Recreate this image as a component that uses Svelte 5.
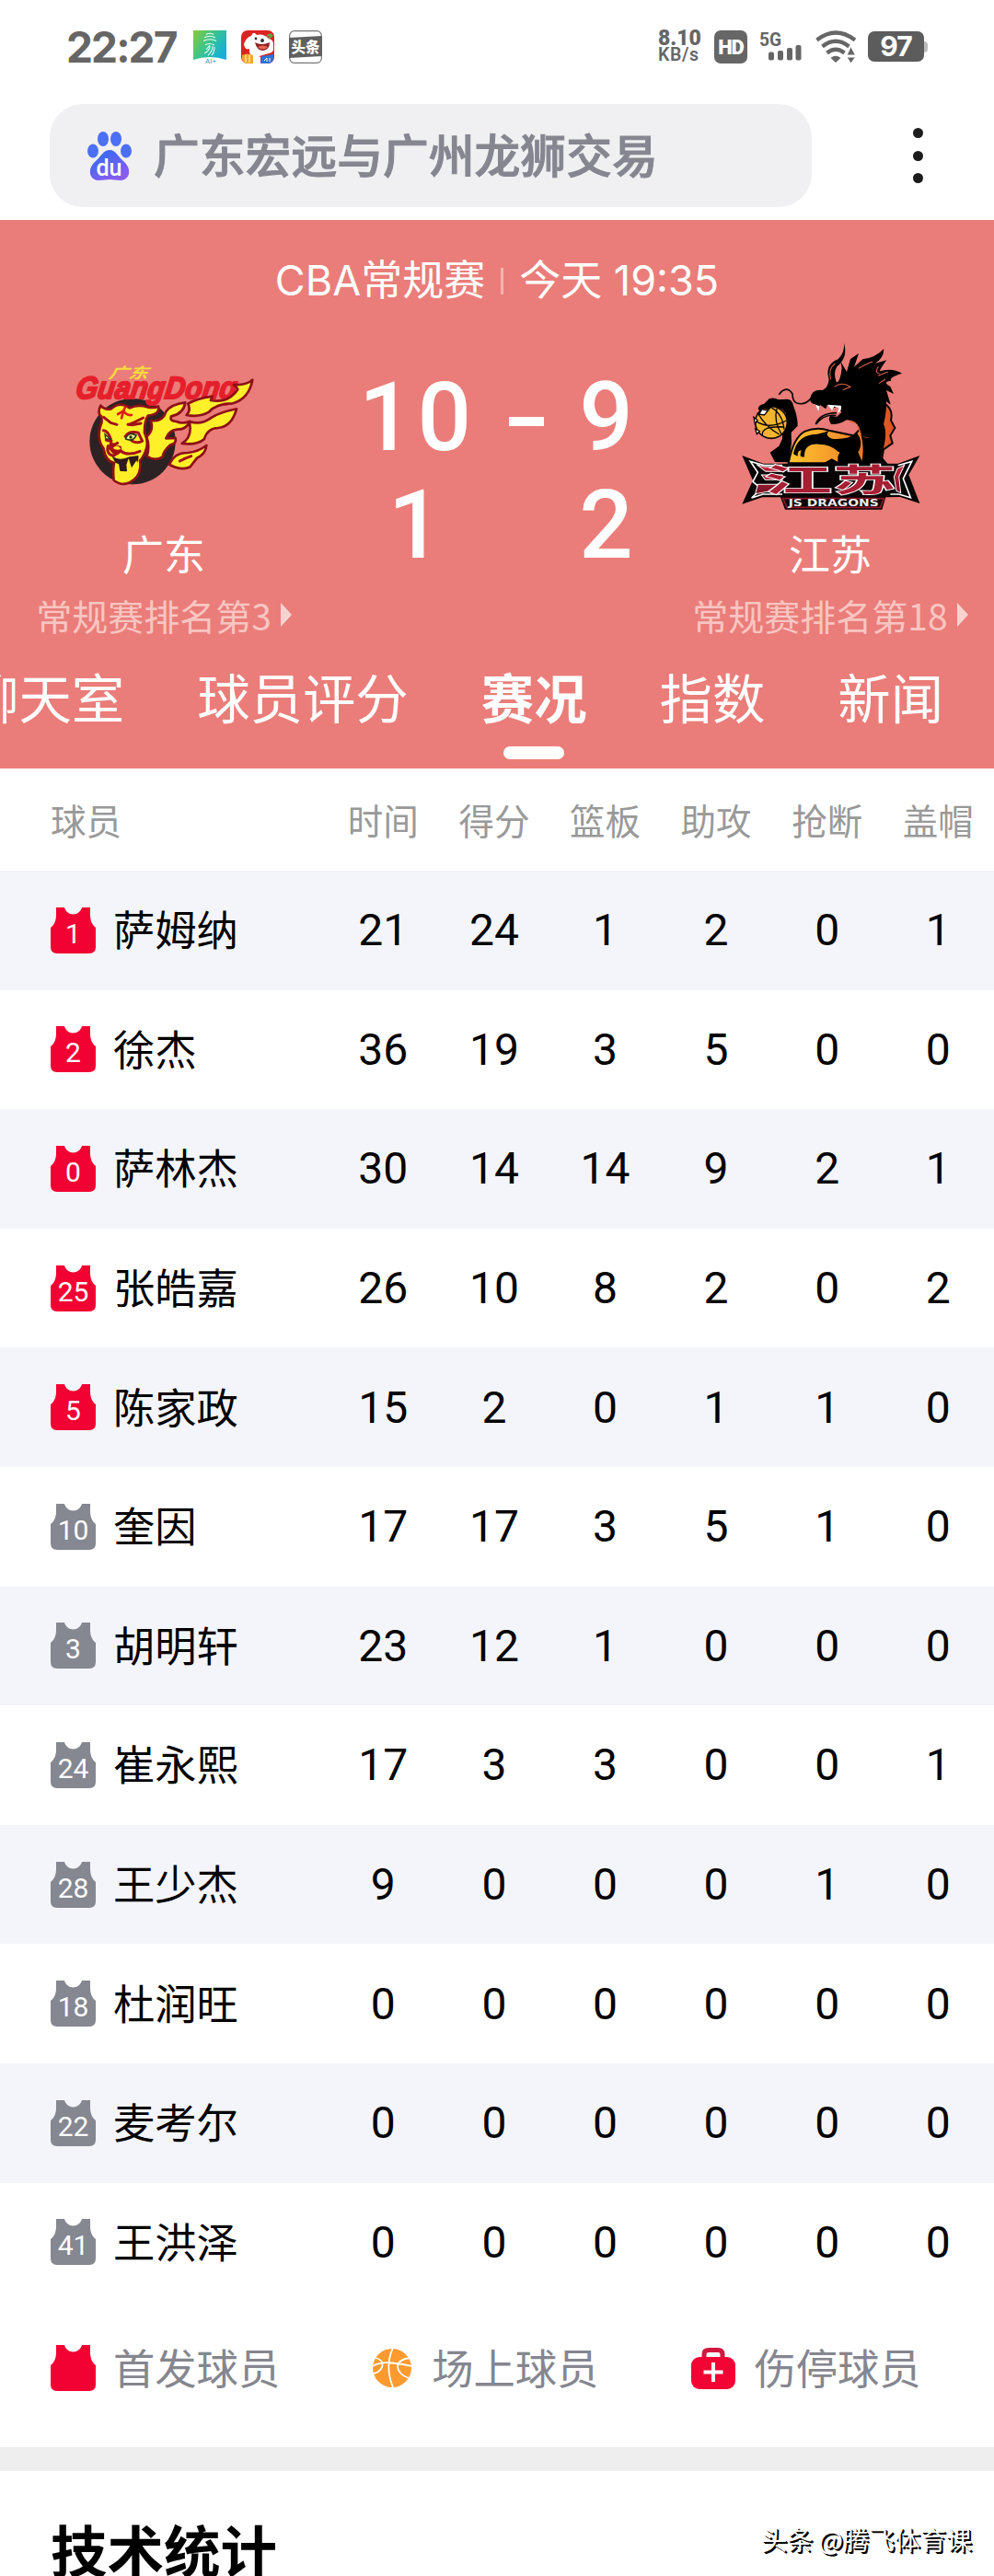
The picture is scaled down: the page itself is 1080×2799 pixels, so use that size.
<script lang="ts">
  type Player = {
    num: number;
    name: string;
    starter?: boolean;
    stats: number[];
  };

  const tabs = ["聊天室", "球员评分", "赛况", "指数", "新闻"];
  const activeTab = "赛况";
  const columns = ["时间", "得分", "篮板", "助攻", "抢断", "盖帽"];

  const players: Player[] = [
    { num: 1, name: "萨姆纳", starter: true, stats: [21, 24, 1, 2, 0, 1] },
    { num: 2, name: "徐杰", starter: true, stats: [36, 19, 3, 5, 0, 0] },
    { num: 0, name: "萨林杰", starter: true, stats: [30, 14, 14, 9, 2, 1] },
    { num: 25, name: "张皓嘉", starter: true, stats: [26, 10, 8, 2, 0, 2] },
    { num: 5, name: "陈家政", starter: true, stats: [15, 2, 0, 1, 1, 0] },
    { num: 10, name: "奎因", stats: [17, 17, 3, 5, 1, 0] },
    { num: 3, name: "胡明轩", stats: [23, 12, 1, 0, 0, 0] },
    { num: 24, name: "崔永熙", stats: [17, 3, 3, 0, 0, 1] },
    { num: 28, name: "王少杰", stats: [9, 0, 0, 0, 1, 0] },
    { num: 18, name: "杜润旺", stats: [0, 0, 0, 0, 0, 0] },
    { num: 22, name: "麦考尔", stats: [0, 0, 0, 0, 0, 0] },
    { num: 41, name: "王洪泽", stats: [0, 0, 0, 0, 0, 0] },
  ];
</script>

{#snippet jersey(starter: boolean, num: number | null)}
  <svg class="jersey" class:starter viewBox="0 0 49 50">
    <path d="M6 0H15C16 4 20 7.500 24.500 7.500C29 7.500 33 4 34 0H43V8C43 14 45 19 49 22V43Q49 50 42 50H7Q0 50 0 43V22C4 19 6 14 6 8Z" />
    {#if num !== null}
      <text x="24.500" y="39" text-anchor="middle">{num}</text>
    {/if}
  </svg>
{/snippet}

<div class="page">
  <!-- Status bar -->
  <header class="status">
    <span class="clock">22:27</span>
    <svg class="app" viewBox="0 0 36 36">
      <defs>
        <linearGradient id="aiGrad" x1="0" y1="0" x2="1" y2="0.6">
          <stop offset="0" stop-color="#8ccb35" />
          <stop offset="0.5" stop-color="#3cc48b" />
          <stop offset="1" stop-color="#16afd8" />
        </linearGradient>
      </defs>
      <path d="M0 0H36V32Q18 26 0 32Z" fill="url(#aiGrad)" />
      <g fill="none" stroke="#e9fff4" stroke-width="1.100">
        <path d="M14 4.500Q18 2 22 4.500M12 8Q18 4.500 24 8M11 11.500Q18 8 25 11.500M13 16Q17 13 23 16M14 21L18 16M12 25Q18 22 18 17M16 27Q21 23 21 17M20 27Q23 24 23 18" />
      </g>
      <text x="19" y="35.500" font-size="8" text-anchor="middle" fill="#1fa3b5">AI+</text>
    </svg>
    <svg class="app" viewBox="0 0 36 36">
      <rect width="36" height="36" rx="7" fill="#dc2320" />
      <path d="M3 15Q5 8 11 6Q13 0 17 5Q24 3 30 9Q36 10 35 18Q36 24 30 25L16 29Q8 29 9 20Q4 22 3 15Z" fill="#fff" />
      <path d="M15 13Q22 17 31 13Q31 21 24 22Q17 22 15 13Z" fill="#8c2423" />
      <path d="M18 18Q23 15 29 18Q24 23 18 18Z" fill="#ef6358" />
      <circle cx="16" cy="9" r="1.400" fill="#333" />
      <circle cx="23" cy="11" r="2" fill="#333" />
      <path d="M28 6l5-2M30 9l4-4" stroke="#69a44f" stroke-width="2" />
      <path d="M1 27Q7 24 13 27V36H6Q2 35 1 31Z" fill="#f1a82d" />
      <path d="M5 27V35M9 27V35" stroke="#ffe58a" stroke-width="1.500" />
      <path d="M13 25l8 4v7h-8z" fill="#fff" />
      <path d="M22 28L35 26V31Q34 36 29 36H21Z" fill="#2f72cf" />
      <path d="M25 33l3-3v4m3-4v4" stroke="#fff" stroke-width="1" fill="none" />
    </svg>
    <svg class="app" viewBox="0 0 36 36">
      <rect x="0.700" y="0.700" width="34.600" height="34.600" rx="5" fill="#fff" stroke="#777" stroke-width="1.200" />
      <path d="M0 8L36 6V28L0 30Z" fill="#606060" />
      <text x="18" y="24" text-anchor="middle" class="cjk" font-size="15.500" font-weight="900" fill="#fff">头条</text>
    </svg>
    <div class="right">
      <div class="speed"><b>8.10</b><span>KB/s</span></div>
      <span class="hd">HD</span>
      <svg class="signal" viewBox="0 0 46 36">
        <text x="0" y="16.500" font-size="20" font-weight="700" fill="#666" textLength="24" lengthAdjust="spacingAndGlyphs">5G</text>
        <g fill="#666">
          <rect x="10" y="23.500" width="6" height="9" rx="2" />
          <rect x="20" y="22" width="6" height="10.500" rx="2" />
          <rect x="30" y="19" width="6" height="13.500" rx="2" />
          <rect x="39.500" y="16" width="6" height="16.500" rx="2" />
        </g>
      </svg>
      <svg class="wifi" viewBox="0 0 45 36">
        <g fill="none" stroke="#666" stroke-width="4.200">
          <path d="M1.500 10.500Q22 -5.500 43 10.500" />
          <path d="M7.500 17.500Q22 6 36.500 17.500" />
          <path d="M12.500 24.500Q22 17 31.500 24.500" />
        </g>
        <path d="M16.500 30Q22 25.500 27.500 30L22 35Z" fill="#666" />
        <path d="M34 27L38.500 17.500L43.500 27ZM34 29H43.500L38.500 36Z" fill="#666" stroke="#fff" stroke-width="1" />
      </svg>
      <div class="battery"><span>97</span><i></i></div>
    </div>
  </header>

  <!-- Search -->
  <div class="search-row">
    <div class="search">
      <svg class="paw" viewBox="0 0 48 53">
        <defs>
          <linearGradient id="pawGrad" x1="0" y1="0" x2="0.6" y2="1">
            <stop offset="0.300" stop-color="#4368f2" />
            <stop offset="1" stop-color="#8a5cf0" />
          </linearGradient>
        </defs>
        <g fill="#4b6ff5">
          <ellipse cx="17" cy="8" rx="6" ry="8" />
          <ellipse cx="31" cy="8" rx="6" ry="8" />
          <ellipse cx="6" cy="21" rx="6" ry="7.500" />
          <ellipse cx="42" cy="21" rx="6" ry="7.500" />
        </g>
        <path d="M24 20C31 20 33 27 39 32C49 40 46 53 36 53C31 53 28 52 24 52C20 52 17 53 12 53C2 53 -1 40 9 32C15 27 17 20 24 20Z" fill="url(#pawGrad)" />
        <text x="23.500" y="47.500" text-anchor="middle" font-size="25" font-weight="500" fill="#fff">du</text>
      </svg>
      <span>广东宏远与广州龙狮交易</span>
    </div>
    <div class="more"><i></i><i></i><i></i></div>
  </div>

  <!-- Scoreboard -->
  <section class="hero">
    <div class="match">
      <span>CBA常规赛</span><i></i><span>今天 19:35</span>
    </div>

    <div class="board">
      <div class="team">
        <svg class="logo tiger" viewBox="60 80 590 400">
          <circle cx="252" cy="328" r="140" fill="#2c2224" />
          <g class="cjk" fill="#f7dc3b" font-size="48" font-weight="700">
            <text transform="translate(172 121) skewX(-28)" textLength="128" lengthAdjust="spacingAndGlyphs">广东</text>
          </g>
          <text transform="translate(64 187) skewX(-8)" class="wordmark" font-size="102" textLength="524" lengthAdjust="spacingAndGlyphs">GuangDong</text>
          <g fill="#fff02a" stroke="#8d1019" stroke-width="8" stroke-linejoin="round">
            <path d="M433 205Q462 188 512 181L507 194Q565 205 595 158Q590 148 582 143Q626 145 643 127Q632 188 578 204Q525 204 501 232Q470 250 428 242Q443 228 433 205Z" />
            <path d="M438 263Q475 276 510 250Q541 231 591 222Q575 281 530 284Q496 285 486 320Q463 341 413 335Q440 318 440 286Z" />
            <path d="M311 260Q350 266 361 231Q376 207 424 201Q418 239 378 246Q372 263 395 263Q414 272 438 263Q428 290 397 289Q371 291 361 318L392 317Q397 335 374 340Q352 360 350 378Q325 394 299 377Q309 344 298 313Q323 290 311 260Z" />
            <path d="M373 404Q386 365 431 365Q466 362 493 341Q490 371 462 382L440 411Q413 425 373 404Z" />
            <path d="M148 211Q160 226 182 222Q211 195 243 219Q269 206 300 216Q324 221 336 213Q342 241 302 244Q290 262 291 300Q307 335 293 363Q283 385 276 390Q284 440 244 461Q219 475 191 455Q187 420 192 398Q164 392 157 350Q135 321 147 279Q155 263 150 246Q136 236 148 211Z" />
          </g>
          <g fill="none" stroke="#a31118" stroke-width="9" stroke-linecap="round" stroke-linejoin="round">
            <path d="M228 216L223 228M204 239L223 228L216 252M223 228Q232 244 249 242" stroke="#da201b" stroke-width="8" />
            <path d="M158 249L181 267L201 273M287 251Q250 270 237 273L254 274L279 269" />
            <path d="M157 292Q172 293 181 320M228 312Q242 292 271 300L284 327Q268 336 249 326M166 323Q170 326 183 326M181 334L191 339L203 333" />
            <path d="M172 343Q165 370 190 375L213 359Q236 377 276 360" />
            <path d="M406 392Q422 383 443 376" />
          </g>
          <path d="M175 336L215 343L217 358L205 371L188 368L174 352Z" fill="#a31118" />
          <path d="M188 350Q200 334 214 352Q202 359 188 350" fill="#ffed25" />
          <path d="M184 375Q209 394 242 378L271 374Q275 403 243 427Q221 433 201 419L196 398Z" fill="#30191c" />
          <path d="M196 397L207 402L211 425L234 426L232 404L239 383L249 414L265 390Q279 425 247 444Q221 461 198 444Z" fill="#ffed25" />
          <path d="M230 316Q241 295 264 308Q254 330 230 320Z" fill="#f2f391" stroke="#263522" stroke-width="5" />
          <circle cx="246" cy="314" r="5" fill="#223421" />
          <path d="M162 304L180 321L164 319Z" fill="#f2f391" stroke="#263522" stroke-width="4" />
        </svg>
        <div class="name">广东</div>
        <div class="rank">常规赛排名第3<i></i></div>
      </div>

      <div class="score">
        <div class="points">101</div>
        <div class="dash"></div>
        <div class="points">92</div>
      </div>

      <div class="team">
        <svg class="logo dragon" viewBox="70 30 590 560">
          <defs>
            <linearGradient id="bodyGrad" x1="0" y1="0" x2="1" y2="0">
              <stop offset="0" stop-color="#ffc52b" />
              <stop offset="0.500" stop-color="#f3922c" />
              <stop offset="1" stop-color="#d94f23" />
            </linearGradient>
            <linearGradient id="crimson" x1="0" y1="0" x2="0" y2="1">
              <stop offset="0" stop-color="#cc2942" />
              <stop offset="1" stop-color="#781222" />
            </linearGradient>
          </defs>
          <path d="M228 430Q244 345 282 326Q320 310 360 323L440 340L480 300L548 240Q570 260 562 290L575 315L560 340L567 365L538 385L530 430Z" fill="url(#bodyGrad)" stroke="#080406" stroke-width="6" />
          <path d="M244 400Q254 345 305 337Q342 333 360 323Q345 342 370 350Q420 354 452 332Q472 358 458 390Q425 415 390 392Q365 368 327 368Q278 365 280 409Q260 414 270 388Q257 388 258 407Z" />
          <path d="M389 409Q392 391 411 391L450 382L470 430H389Z" />
          <path d="M298 220Q304 188 339 192Q357 185 360 157Q345 108 390 91Q413 66 409 38Q423 85 386 115Q373 136 384 166Q397 166 402 119L398 98L418 132L430 90L457 72L442 116L470 91Q512 86 539 57Q539 87 510 105L548 94Q531 116 525 130Q566 118 598 137Q553 150 563 161Q532 164 560 180L571 204L547 192L561 239L547 229Q548 265 538 303Q556 336 523 430H465Q480 382 458 312Q445 290 417 289Q397 304 367 303Q354 281 366 275L385 279L401 264L389 244L367 254L355 239L350 253L331 240L326 263L316 238Q299 237 298 220Z" />
          <path d="M300 220Q281 242 255 234Q241 228 241 204Q222 174 197 206M385 266Q329 267 317 303Q345 268 383 275" fill="none" stroke="#080406" stroke-width="5" />
          <path d="M366 157Q356 123 380 105M377 181Q403 163 430 181L405 191M456 121Q486 104 502 99M521 115Q507 136 525 138M552 132L520 145M544 156L523 170" fill="none" stroke="#dc654b" stroke-width="3" />
          <path d="M316 239L326 263L330 244ZM355 239L370 258L377 245L392 249L388 267Q405 255 399 242Z" fill="#fff" />
          <path d="M423 293Q451 284 462 326Q470 352 493 347Q458 346 450 302Z" fill="#e85e31" />
          <path d="M184 426L168 395L197 374L208 350L207 300L220 268L202 248L180 253L154 263L132 259Q122 242 149 236L165 220Q181 213 195 223L223 221Q241 221 245 245Q258 277 258 308L237 330L238 364L229 427Z" />
          <circle cx="172" cy="297" r="52" fill="#f2b52d" stroke="#080406" stroke-width="5" />
          <path d="M121 292Q165 322 221 291M127 265Q153 311 198 336M143 339Q139 307 214 312M165 245Q208 263 214 320M190 252Q179 293 206 337" fill="none" stroke="#080406" stroke-width="4" />
          <path d="M132 270L142 254L161 259L149 273ZM115 280l12 10-8 12zM120 318l14 7-9 10z" fill="#fff" stroke="#080406" stroke-width="4" />
          <path d="M142 250Q153 226 177 222Q207 219 222 239L241 257L225 276L211 254L190 249L177 240L164 258Z" />
          <!-- banner behind the team name -->
          <path d="M77 405L146 431H340L369 415L400 431H502L532 409L551 431H585L656 405L620 468L656 561L592 540L545 541L533 581H217L202 541H143L77 563L112 486Z" fill="#080406" />
          <path d="M208 437H151L104 424L128 460L112 490L139 513L108 543L145 531H208M585 437L630 424L602 480L626 542L588 531H560" fill="none" stroke="#fff" stroke-width="5" />
          <path d="M124 434L151 442H208V457H154ZM140 468H208V484H152ZM128 499H208V514L120 530ZM606 436L583 447L572 474L580 520L594 526L588 474Z" fill="url(#crimson)" stroke="#fff" stroke-width="3" />
          <g class="cjk banner-name">
            <text transform="translate(150 521) scale(2.15 1)">江</text>
            <text transform="translate(374 521) scale(2 1)">苏</text>
          </g>
          <path d="M210 545L223 574H527L539 545Z" fill="#080406" stroke="#8e1528" stroke-width="5" />
          <text x="375" y="569" text-anchor="middle" class="banner" textLength="294" lengthAdjust="spacingAndGlyphs">JS DRAGONS</text>
        </svg>
        <div class="name">江苏</div>
        <div class="rank">常规赛排名第18<i></i></div>
      </div>
    </div>

    <nav class="tabs">
      {#each tabs as tab}
        <span class:active={tab === activeTab}>{tab}</span>
      {/each}
    </nav>
  </section>

  <!-- Player stats -->
  <section class="table">
    <div class="row head">
      <span class="player">球员</span>
      {#each columns as col}
        <span>{col}</span>
      {/each}
    </div>
    {#each players as p}
      <div class="row">
        <div class="player">
          {@render jersey(!!p.starter, p.num)}
          <span class="label">{p.name}</span>
        </div>
        {#each p.stats as value}
          <span class="value">{value}</span>
        {/each}
      </div>
    {/each}
  </section>

  <!-- Legend -->
  <div class="legend">
    <div class="item">
      {@render jersey(true, null)}
      <span class="label">首发球员</span>
    </div>
    <div class="item">
      <svg class="ball" viewBox="0 0 42 42">
        <circle cx="21" cy="21" r="21" fill="#ff9a2e" />
        <g fill="none" stroke="#fff" stroke-width="1.800">
          <path d="M0 19Q8 14 21 15.500T42 19M21.500 0Q13 20 22 42M3 10Q14 13 9 22Q6 26 1 27M40 10Q27 12 27 20Q28 28 39 32" />
        </g>
      </svg>
      <span class="label">场上球员</span>
    </div>
    <div class="item">
      <svg class="kit" viewBox="0 0 48 45">
        <path d="M14 13V7Q14 2.500 19 2.500H29Q34 2.500 34 7V13" fill="none" stroke="#d21640" stroke-width="5" />
        <rect y="10" width="48" height="35" rx="9" fill="#f20535" />
        <path d="M24 16V37M13.500 26.500H34.500" stroke="#fff" stroke-width="4" />
      </svg>
      <span class="label">伤停球员</span>
    </div>
  </div>

  <div class="divider"></div>
  <h2>技术统计</h2>
  <div class="watermark">头条 @腾飞体育课</div>
</div>

<style>
  :global(body) {
    margin: 0;
    background: #fff;
  }

  .page {
    position: relative;
    width: 1080px;
    height: 2799px;
    overflow: hidden;
    background: #fff;
    color: #000;
    font-family: Roboto, "Noto Sans CJK SC", sans-serif;
  }

  .page * {
    box-sizing: border-box;
  }

  svg {
    display: block;
    flex: none;
  }

  .cjk {
    font-family: "Noto Sans CJK SC", sans-serif;
  }

  /* status bar */
  .status {
    display: flex;
    align-items: center;
    height: 113px;
    padding: 0 72px 12px 72px;
  }

  .clock {
    width: 138px;
    font-family: Inter, sans-serif;
    font-size: 46px;
    font-weight: 700;
    letter-spacing: -1.9px;
    color: #666;
  }

  .app {
    width: 36px;
    height: 36px;
    margin-right: 16px;
  }

  .right {
    display: flex;
    align-items: center;
    margin-left: auto;
    color: #666;
  }

  .speed {
    display: flex;
    flex-direction: column;
    width: 61px;
    font-size: 23px;
    line-height: 18px;
    font-weight: 700;
    white-space: nowrap;
  }

  .speed span {
    font-size: 19.5px;
    font-weight: 600;
    letter-spacing: 0.6px;
  }

  .hd {
    width: 36px;
    height: 36px;
    border-radius: 7px;
    background: #666;
    color: #fff;
    font-size: 22px;
    font-weight: 900;
    line-height: 37px;
    text-align: center;
    letter-spacing: -1px;
  }

  .signal {
    width: 46px;
    height: 36px;
    margin-left: 13px;
  }

  .wifi {
    width: 45px;
    height: 36px;
    margin-left: 15px;
  }

  .battery {
    display: flex;
    align-items: center;
    margin-left: 12px;
  }

  .battery span {
    width: 61px;
    height: 33px;
    border-radius: 7px;
    background: #5c5c5c;
    color: #fff;
    font-family: Inter, sans-serif;
    font-size: 30px;
    font-weight: 700;
    line-height: 33px;
    text-align: center;
    letter-spacing: -1px;
  }

  .battery i {
    width: 4px;
    height: 12px;
    border-radius: 0 4px 4px 0;
    background: #bbb;
  }

  /* search */
  .search-row {
    display: flex;
    align-items: center;
    height: 112px;
    padding-left: 54px;
  }

  .search {
    display: flex;
    align-items: center;
    width: 828px;
    height: 112px;
    padding: 2px 0 0 41px;
    border-radius: 36px;
    background: #f0f0f2;
    color: #858690;
    font-size: 49.8px;
    font-weight: 500;
    line-height: 110px;
    -webkit-text-stroke: 1px #858690;
  }

  .search span {
    padding-top: 2px;
  }

  .paw {
    width: 48px;
    height: 53px;
    margin: 0 24px 2px 0;
    -webkit-text-stroke: 0;
  }

  .more {
    display: flex;
    flex-direction: column;
    gap: 13.5px;
    margin-left: 109.5px;
  }

  .more i {
    width: 11px;
    height: 11px;
    border-radius: 50%;
    background: #1c1c1c;
  }

  /* scoreboard */
  .hero {
    height: 596px;
    margin-top: 14px;
    padding-top: 37px;
    background: #ea7d79;
    color: #fff;
  }

  .match {
    display: flex;
    justify-content: center;
    align-items: center;
    height: 58px;
    font-family: Inter, "Noto Sans CJK SC", sans-serif;
    font-size: 45px;
    line-height: 58px;
  }

  .match i {
    width: 3px;
    height: 29px;
    margin: 0 17px;
    background: #f3b3b0;
  }

  .board {
    display: grid;
    grid-template-columns: 356px 1fr 356px;
    height: 370px;
  }

  .team {
    display: flex;
    flex-direction: column;
    align-items: center;
  }

  .logo {
    width: 196.7px;
  }

  .tiger {
    height: 133.3px;
    margin: 63px 0 42px;
  }

  .dragon {
    height: 186.7px;
    margin: 36px 0 15.6px;
  }

  .wordmark {
    font-family: "Liberation Sans", sans-serif;
    font-style: italic;
    font-weight: 700;
    fill: #e51f2b;
    stroke: #e51f2b;
    stroke-width: 6;
  }

  .banner-name {
    font-size: 102px;
    font-weight: 700;
    fill: #a81e33;
    stroke: #fff;
    stroke-width: 5;
    paint-order: stroke;
  }

  .banner {
    font-family: "DejaVu Sans", sans-serif;
    font-size: 29px;
    font-weight: 700;
    fill: #f2eaeb;
  }

  .name {
    font-size: 45px;
    line-height: 66px;
  }

  .rank {
    display: flex;
    align-items: center;
    margin-top: -3px;
    color: #f8c5c2;
    font-family: "Noto Sans CJK SC", sans-serif;
    font-size: 39px;
    line-height: 66px;
  }

  .rank i {
    margin-left: 10px;
    border-left: 12px solid #fad3d1;
    border-top: 13px solid transparent;
    border-bottom: 13px solid transparent;
  }

  .score {
    display: flex;
    padding: 61px 0 0 30px;
  }

  /* each digit column is only two glyphs wide, so a third digit wraps */
  .points {
    width: 135px;
    font-size: 103px;
    font-weight: 500;
    line-height: 117px;
    letter-spacing: 5px;
    text-align: center;
    word-break: break-all;
  }

  .dash {
    width: 38px;
    height: 10px;
    margin: 58px 0 0 32px;
    background: #fff;
  }

  .points:last-child {
    width: 64px;
    margin-left: 38px;
  }

  .tabs {
    display: flex;
    gap: 79px;
    margin-left: -37px;
    padding-top: 18px;
    font-size: 57.4px;
    line-height: 80px;
    white-space: nowrap;
  }

  .tabs .active {
    display: flex;
    flex-direction: column;
    align-items: center;
    font-weight: 700;
  }

  .tabs .active::after {
    content: "";
    width: 66px;
    height: 14px;
    margin-top: 9px;
    border-radius: 7px;
    background: #fff;
  }

  /* stats table */
  .row {
    display: grid;
    grid-template-columns: 356px repeat(6, 120.6px);
    align-items: center;
    height: 129.6px;
    text-align: center;
  }

  .row:nth-child(even) {
    background: #f4f5fa;
  }

  .row.head {
    height: 111px;
    padding-bottom: 2px;
    color: #999;
    font-size: 38.5px;
  }

  .player {
    display: flex;
    align-items: center;
    padding-left: 55px;
    font-size: 45.3px;
    white-space: nowrap;
  }

  .head .player {
    font-size: 38.5px;
  }

  .label {
    padding-bottom: 5px;
  }

  .value {
    font-size: 48px;
  }

  .jersey {
    width: 49px;
    height: 50px;
    margin-right: 19px;
    fill: #858791;
  }

  .jersey.starter {
    fill: #f20233;
  }

  .jersey text {
    fill: #fff;
    font-size: 30px;
  }

  /* legend */
  .legend {
    display: flex;
    align-items: center;
    gap: 101px;
    height: 144px;
    padding-left: 55px;
    color: #85868f;
    font-size: 45.3px;
  }

  .item {
    display: flex;
    flex: none;
    align-items: center;
    white-space: nowrap;
  }

  .ball {
    width: 42px;
    height: 42px;
    margin-right: 22px;
  }

  .kit {
    width: 48px;
    height: 45px;
    margin-right: 20px;
  }

  .divider {
    height: 26px;
    margin-top: 14px;
    background: #eee;
  }

  h2 {
    margin: 45px 0 0 55px;
    font-size: 61.5px;
    font-weight: 700;
    line-height: 90px;
  }

  .watermark {
    position: absolute;
    right: 24px;
    bottom: 20px;
    color: #fff;
    font-family: "Noto Sans CJK SC", sans-serif;
    font-size: 28px;
    line-height: 40px;
    text-shadow: 1px 1px 0 #000, 2px 2px 0 #000;
  }
</style>
